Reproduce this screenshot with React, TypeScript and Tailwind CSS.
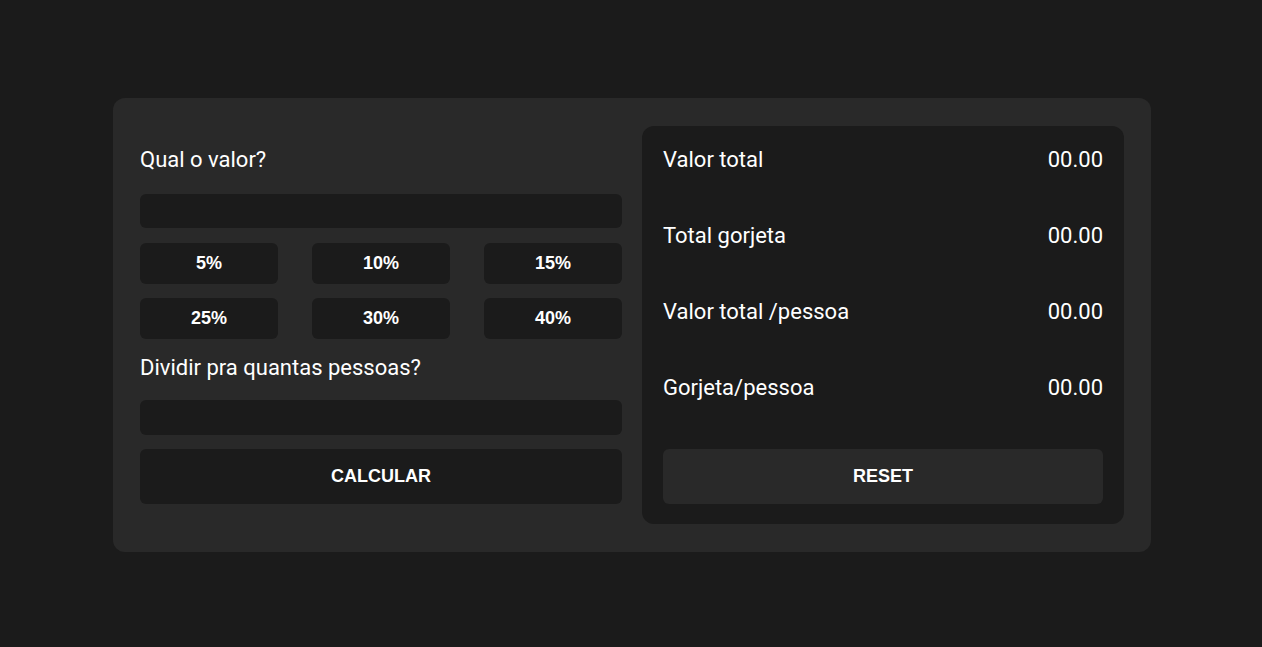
export default function App() {
  const tips = ["5%", "10%", "15%", "25%", "30%", "40%"];
  const results = [
    { label: "Valor total", value: "00.00" },
    { label: "Total gorjeta", value: "00.00" },
    { label: "Valor total /pessoa", value: "00.00" },
    { label: "Gorjeta/pessoa", value: "00.00" },
  ];

  return (
    <div className="min-h-screen bg-[#1b1b1b] pt-[98px] font-['Roboto',sans-serif] text-white">
      <div className="ml-[113px] flex w-[1038px] gap-5 rounded-xl bg-[#292929] px-[27px] py-[28px]">
        {/* left: inputs */}
        <div className="flex w-[482px] flex-col">
          <label className="mt-[22px] text-[22px] leading-6">Qual o valor?</label>
          <input className="mt-[22px] h-[34px] rounded-md bg-[#1b1b1b] px-3 outline-none" />
          <div className="mt-[15px] grid grid-cols-3 gap-x-[34px] gap-y-[14px]">
            {tips.map((t) => (
              <button
                key={t}
                className="h-[41px] rounded-md bg-[#1b1b1b] pb-[2px] font-['Liberation_Sans',Arial,sans-serif] text-lg font-bold"
              >
                {t}
              </button>
            ))}
          </div>
          <label className="mt-[17px] text-[22px] leading-6">Dividir pra quantas pessoas?</label>
          <input className="mt-[20px] h-[35px] rounded-md bg-[#1b1b1b] px-3 outline-none" />
          <button className="mt-[14px] h-[55px] rounded-md bg-[#1b1b1b] pb-[2px] font-['Liberation_Sans',Arial,sans-serif] text-lg font-bold">
            CALCULAR
          </button>
        </div>

        {/* right: results */}
        <div className="flex w-[482px] flex-col rounded-xl bg-[#1b1b1b] px-[21px] pb-5 pt-[22px]">
          <div className="flex flex-col gap-[52px]">
            {results.map((r) => (
              <div key={r.label} className="flex justify-between text-[22px] leading-6">
                <span>{r.label}</span>
                <span>{r.value}</span>
              </div>
            ))}
          </div>
          <button className="mt-[49px] h-[55px] rounded-md bg-[#292929] pb-[2px] font-['Liberation_Sans',Arial,sans-serif] text-lg font-bold">
            RESET
          </button>
        </div>
      </div>
    </div>
  );
}
